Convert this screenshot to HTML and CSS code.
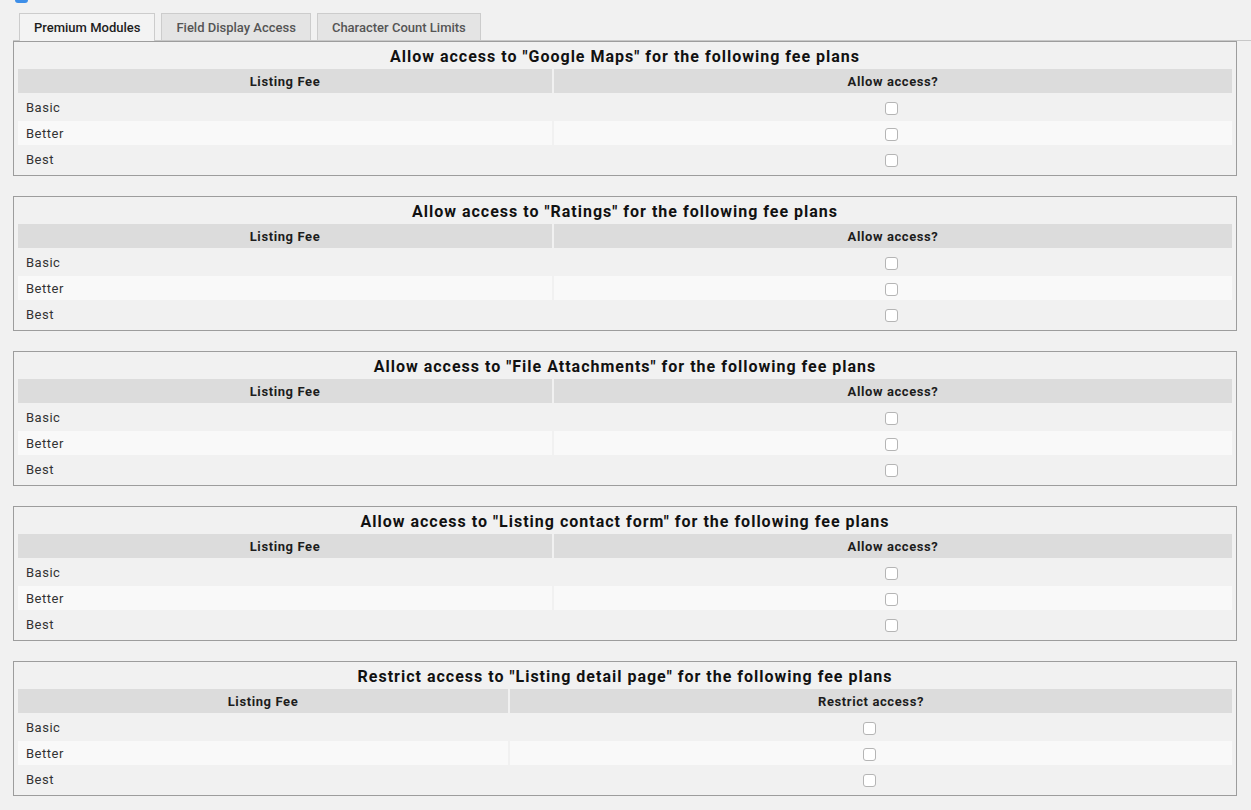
FILE: index.html
```html
<!DOCTYPE html>
<html lang="en">
  <head>
    <meta charset="UTF-8" />
    <title>Fee Plan Access</title>
    <link rel="stylesheet" href="styles.css">
  </head>
  <body>
    <div class="top-check"></div>

    <ul class="tabs">
      <li class="tab active">Premium Modules</li>
      <li class="tab">Field Display Access</li>
      <li class="tab">Character Count Limits</li>
    </ul>

    <div class="panels">
      <div class="panel">
        <h3>Allow access to "Google Maps" for the following fee plans</h3>
        <table>
          <tr><th class="fee-col">Listing Fee</th><th>Allow access?</th></tr>
          <tr><td>Basic</td><td class="check"><input type="checkbox"></td></tr>
          <tr><td>Better</td><td class="check"><input type="checkbox"></td></tr>
          <tr><td>Best</td><td class="check"><input type="checkbox"></td></tr>
        </table>
      </div>

      <div class="panel">
        <h3>Allow access to "Ratings" for the following fee plans</h3>
        <table>
          <tr><th class="fee-col">Listing Fee</th><th>Allow access?</th></tr>
          <tr><td>Basic</td><td class="check"><input type="checkbox"></td></tr>
          <tr><td>Better</td><td class="check"><input type="checkbox"></td></tr>
          <tr><td>Best</td><td class="check"><input type="checkbox"></td></tr>
        </table>
      </div>

      <div class="panel">
        <h3>Allow access to "File Attachments" for the following fee plans</h3>
        <table>
          <tr><th class="fee-col">Listing Fee</th><th>Allow access?</th></tr>
          <tr><td>Basic</td><td class="check"><input type="checkbox"></td></tr>
          <tr><td>Better</td><td class="check"><input type="checkbox"></td></tr>
          <tr><td>Best</td><td class="check"><input type="checkbox"></td></tr>
        </table>
      </div>

      <div class="panel">
        <h3>Allow access to "Listing contact form" for the following fee plans</h3>
        <table>
          <tr><th class="fee-col">Listing Fee</th><th>Allow access?</th></tr>
          <tr><td>Basic</td><td class="check"><input type="checkbox"></td></tr>
          <tr><td>Better</td><td class="check"><input type="checkbox"></td></tr>
          <tr><td>Best</td><td class="check"><input type="checkbox"></td></tr>
        </table>
      </div>

      <div class="panel">
        <h3>Restrict access to "Listing detail page" for the following fee plans</h3>
        <table>
          <tr><th class="fee-col narrow">Listing Fee</th><th>Restrict access?</th></tr>
          <tr><td>Basic</td><td class="check"><input type="checkbox"></td></tr>
          <tr><td>Better</td><td class="check"><input type="checkbox"></td></tr>
          <tr><td>Best</td><td class="check"><input type="checkbox"></td></tr>
        </table>
      </div>
    </div>
  </body>
</html>
```

FILE: styles.css
```css
body {
  font-family: Roboto, "Liberation Sans", sans-serif;
  font-size: 13px;
  background-color: #f1f1f1;
  color: #333;
  margin: 0;
  padding: 0;
}

.top-check {
  width: 13px;
  height: 3px;
  margin-left: 15px;
  background-color: #3d8ee8;
  border-radius: 0 0 3px 3px;
}

/* Tabs */
.tabs {
  list-style: none;
  margin: 10px 0 0 13px;
  padding: 0 0 0 6px;
  display: flex;
  gap: 6px;
  border-bottom: 1px solid #c8c8c8;
  height: 27px;
}

.tab {
  height: 27px;
  box-sizing: border-box;
  padding: 0 14px;
  line-height: 28px;
  font-size: 13px;
  font-weight: 500;
  color: #555;
  background-color: #e4e4e4;
  border: 1px solid #cccccc;
  border-bottom: none;
}

.tab.active {
  color: #1d1d1d;
  background-color: #f3f3f3;
  height: 28px;
}

/* Panels */
.panels {
  margin: 0 14px 0 13px;
  display: flex;
  flex-direction: column;
  gap: 20px;
}

.panel {
  border: 1px solid #9d9d9d;
  padding: 0 2px 2px;
}

.panel h3 {
  margin: 0;
  padding-top: 4px;
  font-size: 16px;
  line-height: 21px;
  font-weight: 700;
  letter-spacing: 1px;
  text-align: center;
  color: #111;
}

table {
  width: 100%;
  border-spacing: 2px;
}

th {
  height: 24px;
  padding: 0;
  background-color: #dcdcdc;
  font-size: 13px;
  font-weight: 700;
  letter-spacing: 0.6px;
  color: #1d1d1d;
}

.fee-col {
  width: 534px;
}

.fee-col.narrow {
  width: 490px;
}

td {
  height: 24px;
  padding: 0 8px;
  letter-spacing: 0.5px;
  color: #333;
}

tr:nth-child(3) td {
  background-color: #f9f9f9;
}

td.check {
  text-align: center;
}

input[type="checkbox"] {
  appearance: none;
  width: 13px;
  height: 13px;
  margin: 2px 4px 0 0;
  background-color: #fff;
  border: 1px solid #b5b5b5;
  border-radius: 3px;
  box-sizing: border-box;
  vertical-align: middle;
}
```
